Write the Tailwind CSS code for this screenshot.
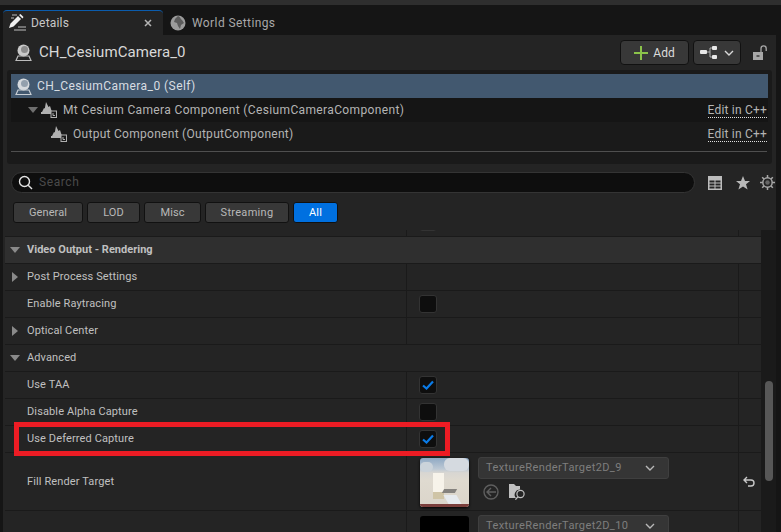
<!DOCTYPE html>
<html lang="en">
<head>
    <meta charset="UTF-8">
    <title>Details</title>
    <script src="https://cdn.jsdelivr.net/npm/@tailwindcss/browser@4"></script>
</head>
<body class="bg-[#151515]">
    <div class="relative w-[781px] h-[532px] overflow-hidden bg-[#151515] font-['Roboto','Liberation_Sans',sans-serif] text-[11px] text-[#c0c0c0]">

        <!-- top strip -->
        <div class="h-[5px] bg-[#2e2e2e]"></div>

        <!-- tabs -->
        <div class="flex h-[30px] pt-[5px]">
            <div class="relative ml-[3px] w-[160px] h-[25px] bg-[#242424] rounded-t-[4px] border-t border-[#0b5cad] flex items-center pl-[5px] text-[#c8c8c8] text-[12px] tracking-[0.2px]">
                <svg class="w-[20px] h-[18px] mr-[3px]" viewBox="0 0 20 18">
                    <path d="M4 1h5M3 4h3M10 13h8M6 16h12" stroke="#8a8a8a" stroke-width="1.3" fill="none"/>
                    <path d="M1 14l1.5-4.5L10 2l3 3-7.5 7.5z M11 1l1.5-1 3 3-1 1.5z" fill="#f0f0f0"/>
                </svg>
                <span>Details</span>
                <svg class="absolute left-[141px] top-[8px] w-[8px] h-[8px]" viewBox="0 0 8 8"><path d="M1 1l6 6M7 1l-6 6" stroke="#b5b5b5" stroke-width="1.5"/></svg>
            </div>
            <div class="flex items-center pl-[7px] text-[#a8a8a8] text-[12px] tracking-[0.4px] h-[25px]">
                <svg class="w-[16px] h-[16px] mr-[6px]" viewBox="0 0 16 16">
                    <circle cx="8" cy="8" r="7.5" fill="#9b9b9b"/>
                    <path d="M8 1c3 1 2 3 4 4l2 3-3 2-1 4-2-3-1-3-3-1 1-3z" fill="#5b5b5b"/>
                </svg>
                <span>World Settings</span>
            </div>
        </div>

        <!-- panel -->
        <div class="h-[497px] bg-[#242424] ml-[3px] mr-[5px] relative">

            <!-- actor header -->
            <div class="h-[35px] flex items-center pl-[12px] pr-[7px]">
                <svg class="w-[17px] h-[17px] mr-[7px]" viewBox="0 0 17 17">
                    <circle cx="8.5" cy="6.5" r="6" fill="#c9c9c9"/>
                    <circle cx="9.5" cy="5.5" r="3.5" fill="#8b8b8b"/>
                    <path d="M3 12h11l2 4.5H1z" fill="none" stroke="#bdbdbd" stroke-width="1.2"/>
                </svg>
                <span class="text-[15px] text-[#d8d8d8] tracking-[0.1px]">CH_CesiumCamera_0</span>
                <div class="ml-auto flex items-center">
                    <div class="w-[69px] h-[25px] flex items-center justify-center rounded-[4px] bg-[#383838] border border-[#111] text-[12px] text-[#dcdcdc]">
                        <svg class="w-[14px] h-[14px] mr-[5px]" viewBox="0 0 14 14"><path d="M7 0v14M0 7h14" stroke="#8bc34a" stroke-width="2"/></svg>
                        Add
                    </div>
                    <div class="ml-[4px] w-[48px] h-[25px] flex items-center justify-center rounded-[4px] bg-[#383838] border border-[#111]">
                        <svg class="w-[17px] h-[13px] mr-[7px]" viewBox="0 0 17 13">
                            <rect x="0" y="4" width="7" height="4" rx="1" fill="#e8e8e8"/>
                            <rect x="12" y="0" width="5" height="4" rx="1" fill="#e8e8e8"/>
                            <rect x="12" y="9" width="5" height="4" rx="1" fill="#e8e8e8"/>
                            <path d="M7 6h3M10 2v9M10 2h2M10 11h2" stroke="#b0b0b0" fill="none"/>
                        </svg>
                        <svg class="w-[10px] h-[6px]" viewBox="0 0 10 6"><path d="M1 1l4 4 4-4" stroke="#d8d8d8" stroke-width="1.4" fill="none"/></svg>
                    </div>
                    <svg class="ml-[12px] mr-[1px] w-[15px] h-[15px]" viewBox="0 0 15 15">
                        <rect x="0" y="7" width="10" height="8" fill="#a8a8a8"/>
                        <rect x="3.5" y="10" width="3" height="2" fill="#555"/>
                        <path d="M8 7V3.5a2.6 2.6 0 0 1 5.2 0V6" stroke="#a8a8a8" stroke-width="1.3" fill="none"/>
                    </svg>
                </div>
            </div>

            <!-- component tree -->
            <div class="mx-[4px] h-[94px] bg-[#1a1a1a] rounded-[3px] pt-[4px] pl-[4px] pr-[4px]">
                <div class="h-[24px] bg-[#42586f] flex items-center pl-[4px] text-[12px] text-[#d8dde2] tracking-[0.45px]">
                    <svg class="w-[17px] h-[17px] mr-[5px]" viewBox="0 0 17 17">
                        <circle cx="8.5" cy="6.5" r="6" fill="#d5d9dd"/>
                        <circle cx="9.5" cy="5.5" r="3.5" fill="#93a0ad"/>
                        <path d="M3 12h11l2 4.5H1z" fill="none" stroke="#c8ced4" stroke-width="1.2"/>
                    </svg>
                    <span>CH_CesiumCamera_0 (Self)</span>
                </div>
                <div class="h-[24px] bg-[#151515] flex items-center pl-[17px] pr-[1px] text-[12px] text-[#b4b4b4] tracking-[0.36px]">
                    <svg class="w-[10px] h-[6px] mr-[3px]" viewBox="0 0 10 6"><path d="M0 0h10L5 6z" fill="#6f6f6f"/></svg>
                    <svg class="w-[16px] h-[16px] mr-[6px]" viewBox="0 0 16 16">
                        <path d="M5 0l2.5 5L9 4l2 6h1v2H0v-2h1l2-4 .8.6z" fill="#b0b0b0"/>
                        <rect x="10" y="9" width="5.5" height="6.5" fill="#1a1a1a" stroke="#b0b0b0"/>
                        <path d="M12 11v2.5h2" stroke="#b0b0b0" fill="none"/>
                    </svg>
                    <span>Mt Cesium Camera Component (CesiumCameraComponent)</span>
                    <span class="ml-auto border-b border-dotted border-[#e0e0e0] leading-[14px] tracking-[0.2px]">Edit in C++</span>
                </div>
                <div class="h-[24px] flex items-center pl-[40px] pr-[1px] text-[12px] text-[#b4b4b4] tracking-[0.28px]">
                    <svg class="w-[16px] h-[16px] mr-[6px]" viewBox="0 0 16 16">
                        <path d="M5 0l2.5 5L9 4l2 6h1v2H0v-2h1l2-4 .8.6z" fill="#b0b0b0"/>
                        <rect x="10" y="9" width="5.5" height="6.5" fill="#1a1a1a" stroke="#b0b0b0"/>
                        <path d="M12 11v2.5h2" stroke="#b0b0b0" fill="none"/>
                    </svg>
                    <span>Output Component (OutputComponent)</span>
                    <span class="ml-auto border-b border-dotted border-[#e0e0e0] leading-[14px] tracking-[0.2px]">Edit in C++</span>
                </div>
                <div class="mt-[5px] h-px bg-[#4f4f4f] mr-[1px]"></div>
            </div>

            <!-- search -->
            <div class="h-[29px] flex items-start pl-[8px] pt-[8px]">
                <div class="w-[684px] h-[21px] rounded-full bg-[#0e0e0e] border border-[#343434] flex items-center pl-[6px]">
                    <svg class="w-[15px] h-[15px] mr-[6px]" viewBox="0 0 15 15"><circle cx="6.5" cy="6.5" r="5" stroke="#e4e4e4" stroke-width="1.4" fill="none"/><path d="M10.2 10.2L14 14" stroke="#e4e4e4" stroke-width="1.4"/></svg>
                    <span class="text-[#4a4a4a] text-[12px] tracking-[0.6px] -mt-[2px]">Search</span>
                </div>
                <svg class="ml-[13px] mt-[4px] w-[14px] h-[14px]" viewBox="0 0 14 14">
                    <path d="M0 0h14v14H0z M1.5 4.5v2h5v-2z M7.5 4.5v2h5v-2z M1.5 7.5v2h5v-2z M7.5 7.5v2h5v-2z M1.5 10.5v2h5v-2z M7.5 10.5v2h5v-2z" fill="#bcbcbc" fill-rule="evenodd"/>
                </svg>
                <svg class="ml-[14px] mt-[4px] w-[14px] h-[14px]" viewBox="0 0 14 14"><path d="M7 0l2 5h5l-4 3.2 1.6 5.3L7 10.4l-4.6 3.1L4 8.2 0 5h5z" fill="#b8b8b8"/></svg>
                <svg class="ml-[10px] mt-[3px] w-[15px] h-[15px]" viewBox="0 0 16 16">
                    <circle cx="8" cy="8" r="5" fill="none" stroke="#a8a8a8" stroke-width="1.6"/>
                    <circle cx="8" cy="8" r="2.4" fill="#666"/>
                    <path d="M8 0v3M8 13v3M0 8h3M13 8h3M2.3 2.3l2 2M11.7 11.7l2 2M13.7 2.3l-2 2M4.3 11.7l-2 2" stroke="#a8a8a8" stroke-width="1.6"/>
                </svg>
            </div>

            <!-- filters -->
            <div class="flex h-[21px] mt-[9px] ml-[10px] gap-[4px] text-[11px] text-[#b8b8b8] tracking-[0.1px]">
                <div class="w-[70px] pt-[1px] flex items-center justify-center rounded-[3px] bg-[#383838] border border-[#111]">General</div>
                <div class="w-[53px] pt-[1px] flex items-center justify-center rounded-[3px] bg-[#383838] border border-[#111]">LOD</div>
                <div class="w-[57px] pt-[1px] flex items-center justify-center rounded-[3px] bg-[#383838] border border-[#111]">Misc</div>
                <div class="w-[84px] pt-[1px] flex items-center justify-center rounded-[3px] bg-[#383838] border border-[#111] tracking-[0.3px]">Streaming</div>
                <div class="w-[45px] pt-[1px] flex items-center justify-center rounded-[3px] bg-[#0070e0] border border-[#111] text-white">All</div>
            </div>

            <!-- property list -->
            <div class="absolute left-[2px] top-[195px] w-[771px] h-[302px] flex overflow-hidden tracking-[0.12px]">
                <div class="w-[756px] shrink-0">

                    <!-- row cut off by the scroll -->
                    <div class="h-[7px] grid grid-cols-[402px_332px_1fr] overflow-hidden border-b border-[#1a1a1a]">
                        <div class="border-r border-[#1a1a1a]"></div>
                        <div class="border-r border-[#1a1a1a] pl-[12px]"><div class="-mt-[17px] w-[18px] h-[18px] rounded-[3px] bg-[#0e0e0e] border border-[#333]"></div></div>
                        <div></div>
                    </div>

                    <div class="h-[27px] bg-[#2f2f2f] border-b border-[#1a1a1a] flex items-center pl-[5px] font-bold text-[#c0c0c0] tracking-[0.02px]">
                        <svg class="w-[10px] h-[6px] mr-[7px]" viewBox="0 0 10 6"><path d="M0 0h10L5 6z" fill="#8a8a8a"/></svg>
                        <span>Video Output - Rendering</span>
                    </div>

                    <div class="h-[27px] grid grid-cols-[402px_332px_1fr] border-b border-[#1a1a1a]">
                        <div class="border-r border-[#1a1a1a] flex items-center pl-[7px]">
                            <svg class="w-[6px] h-[10px] mr-[9px]" viewBox="0 0 6 10"><path d="M0 0l6 5-6 5z" fill="#8a8a8a"/></svg>
                            <span>Post Process Settings</span>
                        </div>
                        <div class="border-r border-[#1a1a1a]"></div>
                        <div></div>
                    </div>

                    <div class="h-[27px] grid grid-cols-[402px_332px_1fr] border-b border-[#1a1a1a]">
                        <div class="border-r border-[#1a1a1a] flex items-center pl-[22px]">Enable Raytracing</div>
                        <div class="border-r border-[#1a1a1a] flex items-center pl-[12px]">
                            <div class="w-[18px] h-[18px] rounded-[3px] bg-[#0e0e0e] border border-[#333]"></div>
                        </div>
                        <div></div>
                    </div>

                    <div class="h-[27px] grid grid-cols-[402px_332px_1fr] border-b border-[#1a1a1a]">
                        <div class="border-r border-[#1a1a1a] flex items-center pl-[7px]">
                            <svg class="w-[6px] h-[10px] mr-[9px]" viewBox="0 0 6 10"><path d="M0 0l6 5-6 5z" fill="#8a8a8a"/></svg>
                            <span>Optical Center</span>
                        </div>
                        <div class="border-r border-[#1a1a1a]"></div>
                        <div></div>
                    </div>

                    <div class="h-[27px] border-b border-[#1a1a1a] flex items-center pl-[5px]">
                        <svg class="w-[10px] h-[6px] mr-[7px]" viewBox="0 0 10 6"><path d="M0 0h10L5 6z" fill="#8a8a8a"/></svg>
                        <span>Advanced</span>
                    </div>

                    <div class="h-[27px] grid grid-cols-[402px_332px_1fr] border-b border-[#1a1a1a]">
                        <div class="border-r border-[#1a1a1a] flex items-center pl-[22px]">Use TAA</div>
                        <div class="border-r border-[#1a1a1a] flex items-center pl-[12px]">
                            <div class="w-[18px] h-[18px] rounded-[3px] bg-[#0e0e0e] border border-[#333] flex items-center justify-center">
                                <svg class="w-[12px] h-[10px]" viewBox="0 0 12 10"><path d="M1 5.5L4.5 8.5 11 1.5" stroke="#0a7be8" stroke-width="2.2" fill="none"/></svg>
                            </div>
                        </div>
                        <div></div>
                    </div>

                    <div class="h-[27px] grid grid-cols-[402px_332px_1fr] border-b border-[#1a1a1a]">
                        <div class="border-r border-[#1a1a1a] flex items-center pl-[22px]">Disable Alpha Capture</div>
                        <div class="border-r border-[#1a1a1a] flex items-center pl-[12px]">
                            <div class="w-[18px] h-[18px] rounded-[3px] bg-[#0e0e0e] border border-[#333]"></div>
                        </div>
                        <div></div>
                    </div>

                    <div class="h-[27px] grid grid-cols-[402px_332px_1fr] border-b border-[#1a1a1a]">
                        <div class="border-r border-[#1a1a1a] flex items-center pl-[22px]">Use Deferred Capture</div>
                        <div class="border-r border-[#1a1a1a] flex items-center pl-[12px]">
                            <div class="w-[18px] h-[18px] rounded-[3px] bg-[#0e0e0e] border border-[#333] flex items-center justify-center">
                                <svg class="w-[12px] h-[10px]" viewBox="0 0 12 10"><path d="M1 5.5L4.5 8.5 11 1.5" stroke="#0a7be8" stroke-width="2.2" fill="none"/></svg>
                            </div>
                        </div>
                        <div></div>
                    </div>

                    <div class="h-[58px] grid grid-cols-[402px_332px_1fr] border-b border-[#1a1a1a]">
                        <div class="border-r border-[#1a1a1a] flex items-center pl-[22px] pt-[1px]">Fill Render Target</div>
                        <div class="border-r border-[#1a1a1a] flex pl-[13px] pt-[4px] tracking-[0.4px]">
                            <div class="relative mt-[1px] w-[49px] h-[49px] rounded-[3px] overflow-hidden shadow-[0_1px_3px_#000] bg-[linear-gradient(180deg,#8fa9c4_0%,#bcc8d4_22%,#d8d6d2_30%,#dfdad0_45%,#dbd5ca_100%)]">
                                <div class="absolute left-[24px] top-[0px] w-[25px] h-[13px] bg-[#d5dae0] rounded-[6px]"></div>
                                <div class="absolute left-0 top-[4px] w-[13px] h-[10px] bg-[#cbd3da] rounded-[5px]"></div>
                                <div class="absolute left-[13px] top-[34px] w-[11px] h-[7px] bg-[#cfc4a6]"></div>
                                <div class="absolute left-[13px] top-[15px] w-[11px] h-[19px] bg-[#f7f3ea]"></div>
                                <div class="absolute left-[23px] top-[31px] w-[13px] h-[4px] bg-[#85827e] -skew-x-30"></div>
                                <div class="absolute left-[26px] top-[37px] w-[13px] h-[9px] bg-[#e6eaee] skew-x-30"></div>
                                <div class="absolute left-0 bottom-0 w-full h-[3px] bg-[#7b3f3c]"></div>
                            </div>
                            <div class="ml-[9px]">
                                <div class="w-[191px] h-[22px] rounded-[3px] bg-[#353535] border border-[#3f3f3f] flex items-center justify-between pl-[7px] pr-[13px] text-[#7e7e7e]">
                                    TextureRenderTarget2D_9
                                    <svg class="w-[10px] h-[6px]" viewBox="0 0 10 6"><path d="M1 1l4 4 4-4" stroke="#b8b8b8" stroke-width="1.4" fill="none"/></svg>
                                </div>
                                <div class="flex items-center mt-[5px] ml-[5px]">
                                    <svg class="w-[16px] h-[16px]" viewBox="0 0 16 16">
                                        <circle cx="8" cy="8" r="7" stroke="#5f5f5f" stroke-width="1.4" fill="none"/>
                                        <path d="M8 4L4 8l4 4M4 8h9" stroke="#5f5f5f" stroke-width="1.4" fill="none"/>
                                    </svg>
                                    <svg class="ml-[10px] w-[17px] h-[16px]" viewBox="0 0 17 16">
                                        <path d="M0 0h5l2 2h4v3.6a5 5 0 0 0-4 8.4H0z" fill="#c0c0c0"/>
                                        <circle cx="11.5" cy="10" r="3.6" fill="none" stroke="#c0c0c0" stroke-width="1.2"/>
                                        <path d="M9 12.7L6.4 15.6" stroke="#c0c0c0" stroke-width="1.3"/>
                                    </svg>
                                </div>
                            </div>
                        </div>
                        <div class="flex items-center pl-[4px]">
                            <svg class="w-[12px] h-[11px]" viewBox="0 0 12 11"><path d="M4 1L1 4l3 3M1 4h7a3 3 0 0 1 0 6H5" stroke="#c8c8c8" stroke-width="1.4" fill="none"/></svg>
                        </div>
                    </div>

                    <div class="h-[27px] grid grid-cols-[402px_332px_1fr] overflow-hidden">
                        <div class="border-r border-[#1a1a1a]"></div>
                        <div class="border-r border-[#1a1a1a] flex pl-[13px] pt-[4px] tracking-[0.4px]">
                            <div class="mt-[1px] w-[49px] h-[49px] shrink-0 rounded-[3px] bg-black"></div>
                            <div class="ml-[9px] w-[191px] h-[22px] rounded-[3px] bg-[#353535] border border-[#3f3f3f] flex items-center justify-between pl-[7px] pr-[13px] text-[#7e7e7e]">
                                TextureRenderTarget2D_10
                                <svg class="w-[10px] h-[6px]" viewBox="0 0 10 6"><path d="M1 1l4 4 4-4" stroke="#b8b8b8" stroke-width="1.4" fill="none"/></svg>
                            </div>
                        </div>
                        <div></div>
                    </div>
                </div>

                <!-- scrollbar -->
                <div class="relative w-[15px] bg-[#1a1a1a]">
                    <div class="absolute left-[4px] top-[151px] w-[8px] h-[100px] rounded-full bg-[#575757]"></div>
                </div>
            </div>
        </div>

        <!-- highlight drawn over the screenshot -->
        <div class="absolute left-[14px] top-[422px] w-[436px] h-[34px] border-[5px] border-[#ed1c24]"></div>
    </div>
</body>
</html>
